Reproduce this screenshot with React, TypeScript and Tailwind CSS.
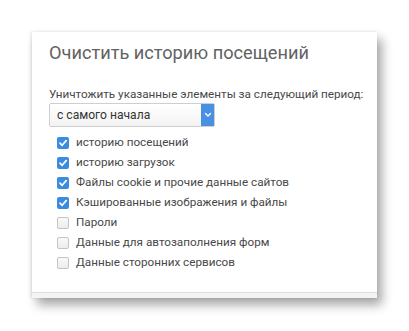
import React from 'react';

const items: { label: string; checked: boolean }[] = [
  { label: 'историю посещений', checked: true },
  { label: 'историю загрузок', checked: true },
  { label: 'Файлы cookie и прочие данные сайтов', checked: true },
  { label: 'Кэшированные изображения и файлы', checked: true },
  { label: 'Пароли', checked: false },
  { label: 'Данные для автозаполнения форм', checked: false },
  { label: 'Данные сторонних сервисов', checked: false },
];

function Box({ checked }: { checked: boolean }) {
  if (checked) {
    return (
      <span className="flex h-[12px] w-[12px] items-center justify-center rounded-[2px] bg-[#3b8be0]">
        <svg width="10" height="10" viewBox="0 0 10 10" fill="none">
          <path d="M2 5.2 L4.1 7.3 L8.2 2.6" stroke="#fff" strokeWidth="1.7" strokeLinecap="round" strokeLinejoin="round" />
        </svg>
      </span>
    );
  }
  return <span className="h-[12px] w-[12px] rounded-[2px] border border-[#c4c4c4] bg-gradient-to-b from-[#fafafa] to-[#ececec]" />;
}

export default function App() {
  return (
    <div className="min-h-[331px] w-[409px] bg-white pl-[32px] pt-[32px] font-['Roboto',sans-serif]">
      <div className="flex h-[266px] w-[345px] flex-col bg-white shadow-[5px_7px_10px_rgba(0,0,0,0.35),-1px_0_3px_rgba(0,0,0,0.12)]">
        <div className="flex flex-1 flex-col pl-[17px] pt-[8px]">
          <h1 className="whitespace-nowrap text-[18.2px] font-normal leading-[26px] text-[#626262]">Очистить историю посещений</h1>
          <p className="mt-[20px] whitespace-nowrap text-[11.7px] leading-[16px] text-[#484848]">Уничтожить указанные элементы за следующий период:</p>
          <div className="mt-[1px] flex h-[24px] w-[166px] items-center rounded-[2px] border border-[#cfcfcf] bg-gradient-to-b from-white to-[#f3f3f3]">
            <span className="flex-1 pl-[7px] text-[12.1px] text-[#333]">с самого начала</span>
            <span className="flex h-full w-[13px] items-center justify-center bg-[#4a90e2]">
              <svg width="8" height="6" viewBox="0 0 8 6" fill="none">
                <path d="M1.5 1.5 L4 4 L6.5 1.5" stroke="#fff" strokeWidth="1.4" strokeLinecap="round" strokeLinejoin="round" />
              </svg>
            </span>
          </div>
          <div className="mt-[6px] flex flex-col pl-[8px]">
            {items.map((it) => (
              <div key={it.label} className="flex h-[20px] items-center gap-[7px]">
                <Box checked={it.checked} />
                <span className="text-[11.7px] text-[#484848]">{it.label}</span>
              </div>
            ))}
          </div>
        </div>
        <div className="h-[6px] border-t border-[#dcdcdc] bg-[#f4f4f4]" />
      </div>
    </div>
  );
}
